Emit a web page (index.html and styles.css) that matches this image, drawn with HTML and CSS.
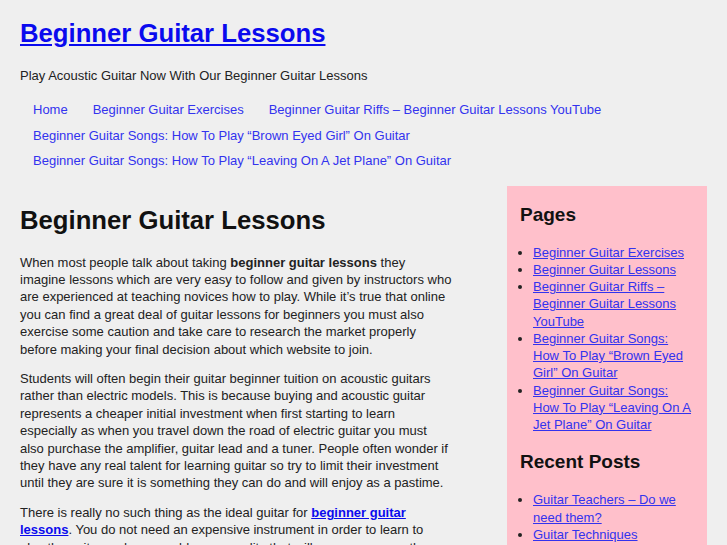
FILE: index.html
```html
<!DOCTYPE html>
<html>
<head>
<meta charset="utf-8">
<link rel="stylesheet" href="styles.css">
</head>
<body>
<div class="page">
  <header class="header">
    <h1 class="site-title"><a href="#">Beginner Guitar Lessons</a></h1>
    <p class="tagline">Play Acoustic Guitar Now With Our Beginner Guitar Lessons</p>
    <ul class="nav">
      <li><a href="#">Home</a></li>
      <li><a href="#">Beginner Guitar Exercises</a></li>
      <li><a href="#">Beginner Guitar Riffs – Beginner Guitar Lessons YouTube</a></li>
      <li><a href="#">Beginner Guitar Songs: How To Play “Brown Eyed Girl” On Guitar</a></li>
      <li><a href="#">Beginner Guitar Songs: How To Play “Leaving On A Jet Plane” On Guitar</a></li>
    </ul>
  </header>
  <div class="layout">
    <main class="content">
      <h2 class="post-title">Beginner Guitar Lessons</h2>
      <p>When most people talk about taking <strong>beginner guitar lessons</strong> they imagine lessons which are very easy to follow and given by instructors who are experienced at teaching novices how to play. While it’s true that online you can find a great deal of guitar lessons for beginners you must also exercise some caution and take care to research the market properly before making your final decision about which website to join.</p>
      <p>Students will often begin their guitar beginner tuition on acoustic guitars rather than electric models. This is because buying and acoustic guitar represents a cheaper initial investment when first starting to learn especially as when you travel down the road of electric guitar you must also purchase the amplifier, guitar lead and a tuner. People often wonder if they have any real talent for learning guitar so try to limit their investment until they are sure it is something they can do and will enjoy as a pastime.</p>
      <p class="last">There is really no such thing as the ideal guitar for <a href="#" class="strong-link">beginner guitar lessons</a>. You do not need an expensive instrument in order to learn to play the guitar and you would see a quality that will serve you more than well when you are starting out.</p>
    </main>
    <aside class="sidebar">
      <h3 class="widget-title">Pages</h3>
      <ul class="widget-list">
        <li><a href="#">Beginner Guitar Exercises</a></li>
        <li><a href="#">Beginner Guitar Lessons</a></li>
        <li><a href="#">Beginner Guitar Riffs – Beginner Guitar Lessons YouTube</a></li>
        <li><a href="#">Beginner Guitar Songs: How To Play “Brown Eyed Girl” On Guitar</a></li>
        <li><a href="#">Beginner Guitar Songs: How To Play “Leaving On A Jet Plane” On Guitar</a></li>
      </ul>
      <h3 class="widget-title">Recent Posts</h3>
      <ul class="widget-list">
        <li><a href="#">Guitar Teachers – Do we need them?</a></li>
        <li><a href="#">Guitar Techniques</a></li>
        <li><a href="#">Learn Guitar Chords</a></li>
      </ul>
    </aside>
  </div>
</div>
</body>
</html>
```
FILE: styles.css
```css
html, body {
  margin: 0;
  padding: 0;
  background: #efefef;
  font-family: "Liberation Sans", Arial, sans-serif;
  color: #222;
  font-size: 13px;
}
.page {
  padding: 18px 20px 0 20px;
}
.site-title {
  margin: 0;
  font-size: 25.7px;
  line-height: 30px;
  font-weight: bold;
}
.site-title a {
  color: #0a0aee;
}
.tagline {
  margin: 19px 0 0 0;
  line-height: 17px;
  color: #222;
}
.nav {
  list-style: none;
  margin: 13px 0 0 0;
  padding: 0 0 0 13px;
  display: flex;
  flex-wrap: wrap;
  column-gap: 25px;
}
.nav li {
  line-height: 25.5px;
}
.nav a {
  color: #3333ee;
  text-decoration: none;
}
.layout {
  display: flex;
  justify-content: space-between;
  margin-top: 12px;
}
.content {
  width: 433px;
}
.post-title {
  margin: 19px 0 0 0;
  font-size: 25.7px;
  line-height: 30px;
  color: #111;
}
.content p {
  margin: 12px 0 0 0;
  line-height: 17.4px;
}
.content p:first-of-type {
  margin-top: 19px;
}
.content p.last {
  padding-right: 5px;
}
.strong-link {
  color: #0a0aee;
  font-weight: bold;
}
.sidebar {
  width: 174px;
  background: #ffc0cb;
  padding: 13px 13px 20px 13px;
}
.widget-title {
  margin: 5px 0 0 0;
  font-size: 19px;
  line-height: 22px;
  color: #111;
}
.widget-list {
  margin: 18px 0 18px 0;
  padding: 0 0 0 13px;
}
.widget-list li {
  line-height: 17.25px;
}
.widget-list a {
  color: #3333ee;
}
```
